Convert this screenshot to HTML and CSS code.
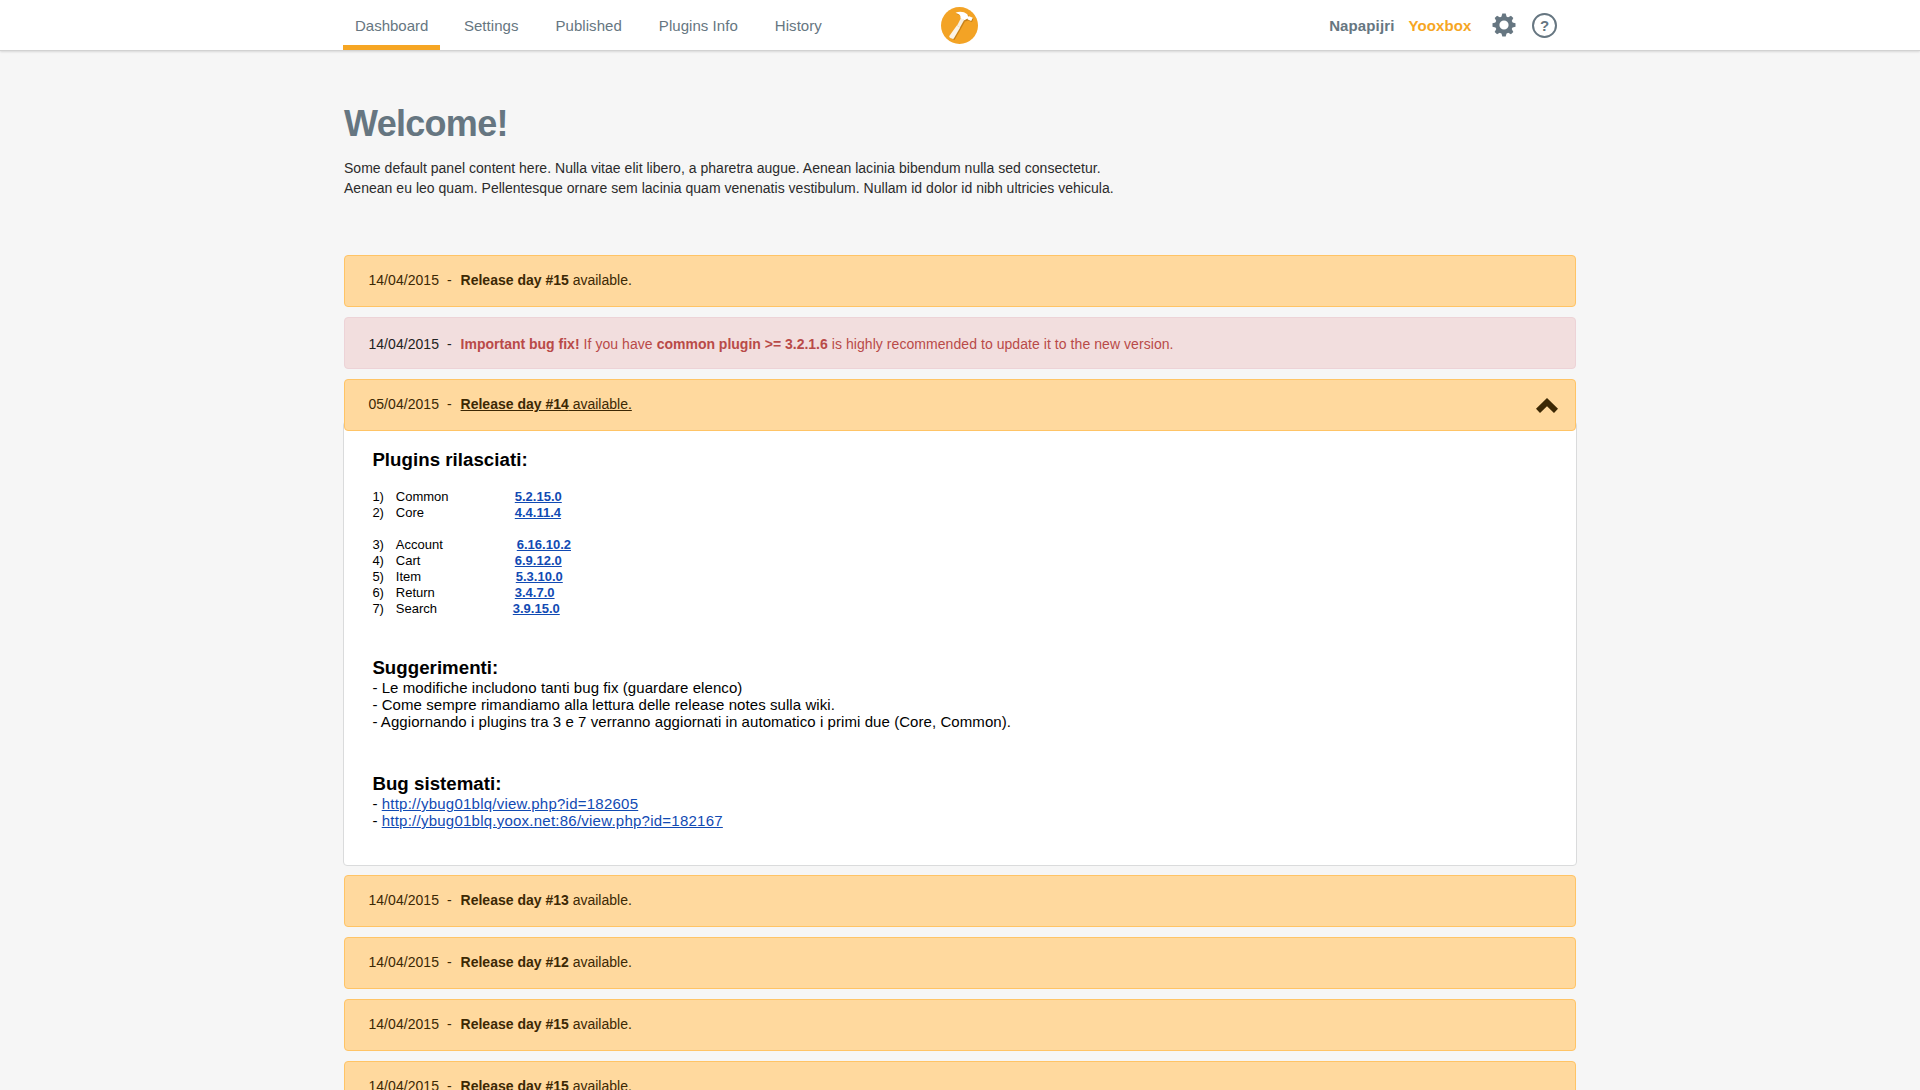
FILE: index.html
```html
<!DOCTYPE html>
<html lang="en">
<head>
<meta charset="utf-8">
<title>Dashboard</title>
<link rel="stylesheet" href="styles.css">
</head>
<body>
<header class="topbar">
  <div class="topbar-inner">
    <nav class="nav">
      <a class="nav-item active">Dashboard</a>
      <a class="nav-item">Settings</a>
      <a class="nav-item">Published</a>
      <a class="nav-item">Plugins Info</a>
      <a class="nav-item">History</a>
    </nav>
    <svg class="logo" viewBox="0 0 37 37" width="37" height="37">
      <circle cx="18.5" cy="18.5" r="18.5" fill="#f3a325"/>
      <g transform="translate(1 1)" fill="#a86a10" opacity=".6">
        <path d="M20 11.5 23 13.5 12.5 32 8 29.5Z"/>
        <path d="M14.5 6C18 4 23 4.500 26.500 7.500L27.500 9.500 31.500 10.500 30 14 26 12.500 23.500 13.500 19.500 11.500C20 8.500 18 7 14.500 6Z"/>
      </g>
      <path d="M20 11 23.200 13 19 20.500 16 18.700Z" fill="#f7efe0"/>
      <path d="M15.800 18.500 19.200 20.500 12.800 31.500C12 32.800 7.500 30.500 8.300 29Z" fill="#fbf3e6"/>
      <path d="M14.500 5.800C18 4 23 4.300 26.300 7.200L27.200 9.600 28.200 9.200 31.800 10.800 30.200 14 26.800 12.400 26.500 11.500 23.500 13.300 19.500 11.200C20 8.500 18 6.800 14.500 5.800Z" fill="#fff"/>
    </svg>
    <div class="account">
      <span class="client">Napapijri</span>
      <span class="brand">Yooxbox</span>
      <svg class="gear" viewBox="-12 -12 24 24" width="24" height="24">
        <circle r="6.700" fill="none" stroke="#667681" stroke-width="4.200"/>
        <g fill="#667681">
          <path id="tooth" d="M-2.800-7.500-1.700-11.500H1.700L2.800-7.500Z"/>
          <use href="#tooth" transform="rotate(45)"/>
          <use href="#tooth" transform="rotate(90)"/>
          <use href="#tooth" transform="rotate(135)"/>
          <use href="#tooth" transform="rotate(180)"/>
          <use href="#tooth" transform="rotate(225)"/>
          <use href="#tooth" transform="rotate(270)"/>
          <use href="#tooth" transform="rotate(315)"/>
        </g>
      </svg>
      <span class="help">?</span>
    </div>
  </div>
</header>
<main class="page">
  <h1>Welcome!</h1>
  <p class="intro">Some default panel content here. Nulla vitae elit libero, a pharetra augue. Aenean lacinia bibendum nulla sed consectetur.<br>Aenean eu leo quam. Pellentesque ornare sem lacinia quam venenatis vestibulum. Nullam id dolor id nibh ultricies vehicula.</p>

  <div class="releases">
    <div class="alert"><span class="date">14/04/2015</span><span class="dash">-</span><span><b>Release day #15</b> available.</span></div>
    <div class="alert danger"><span class="date">14/04/2015</span><span class="dash">-</span><span class="message"><b>Important bug fix!</b> If you have <b>common plugin &gt;= 3.2.1.6</b> is highly recommended to update it to the new version.</span></div>
    <div class="release-open">
      <div class="alert"><span class="date">05/04/2015</span><span class="dash">-</span><span class="title-link"><b>Release day #14</b> available.</span>
        <svg class="chevron" viewBox="0 0 22 15" width="22" height="15"><path d="M11 0 22 10.700 18 15 11 8.200 4 15 0 10.700Z" fill="#3c2804"/></svg>
      </div>
      <section class="notes">
        <h2>Plugins rilasciati:</h2>
        <ul class="plugins">
          <li><span>1)</span><span>Common</span><a>5.2.15.0</a></li>
          <li class="group-end"><span>2)</span><span>Core</span><a>4.4.11.4</a></li>
          <li><span>3)</span><span>Account</span><a class="shift-2">6.16.10.2</a></li>
          <li><span>4)</span><span>Cart</span><a>6.9.12.0</a></li>
          <li><span>5)</span><span>Item</span><a class="shift-1">5.3.10.0</a></li>
          <li><span>6)</span><span>Return</span><a>3.4.7.0</a></li>
          <li><span>7)</span><span>Search</span><a class="shift-back">3.9.15.0</a></li>
        </ul>
        <h2>Suggerimenti:</h2>
        <p class="tips">- Le modifiche includono tanti bug fix (guardare elenco)<br>- Come sempre rimandiamo alla lettura delle release notes sulla wiki.<br>- Aggiornando i plugins tra 3 e 7 verranno aggiornati in automatico i primi due (Core, Common).</p>
        <h2>Bug sistemati:</h2>
        <p class="bugs">- <a>http://ybug01blq/view.php?id=182605</a><br>- <a>http://ybug01blq.yoox.net:86/view.php?id=182167</a></p>
      </section>
    </div>
    <div class="alert"><span class="date">14/04/2015</span><span class="dash">-</span><span><b>Release day #13</b> available.</span></div>
    <div class="alert"><span class="date">14/04/2015</span><span class="dash">-</span><span><b>Release day #12</b> available.</span></div>
    <div class="alert"><span class="date">14/04/2015</span><span class="dash">-</span><span><b>Release day #15</b> available.</span></div>
    <div class="alert"><span class="date">14/04/2015</span><span class="dash">-</span><span><b>Release day #15</b> available.</span></div>
  </div>
</main>
</body>
</html>
```
FILE: styles.css
```css
* { box-sizing: border-box; }
html { height: 100%; overflow: hidden; }
body {
  margin: 0;
  height: 100%;
  overflow: hidden;
  background: #f6f6f6;
  color: #2b2b2b;
  font: 14px/20px "Liberation Sans", Arial, sans-serif;
}
h1, h2, p, ul { margin: 0; padding: 0; }

.topbar {
  height: 50px;
  background: #fff;
  box-shadow: 0 1px 0 #d2d2d2, 0 2px 2px rgba(0, 0, 0, .12);
}
.topbar-inner {
  display: grid;
  grid-template-columns: 598px 37px 1fr;
  width: 1234px;
  height: 50px;
  margin: 0 auto;
}
.nav { display: flex; gap: 13px; font-size: 15px; color: #667681; }
.nav-item { height: 50px; padding: 1px 12px 0; line-height: 49px; letter-spacing: .05px; white-space: nowrap; }
.nav-item.active { margin-right: -1.5px; letter-spacing: 0; border-bottom: 5px solid #f6a623; }
.logo { margin-top: 7px; }
.account { display: flex; align-items: flex-start; justify-content: flex-end; padding-right: 20px; }
.client, .brand { padding-top: 1px; font-size: 15px; font-weight: bold; line-height: 49px; letter-spacing: .12px; }
.client { margin-right: 14px; color: #667681; }
.brand { margin-right: 20.5px; color: #f6a623; }
.gear { margin: 13px 16px 0 0; }
.help {
  width: 25px;
  height: 25px;
  margin-top: 13px;
  border: 2px solid #667681;
  border-radius: 50%;
  color: #667681;
  font-size: 15px;
  font-weight: bold;
  line-height: 21px;
  text-align: center;
}

.page { width: 1232px; margin: 0 auto; padding-top: 54px; }
h1 { color: #667681; font-size: 36px; line-height: 40px; letter-spacing: -.7px; }
.intro { margin-top: 14px; letter-spacing: .026px; }
.releases { display: flex; flex-direction: column; gap: 10px; margin-top: 57px; }

.alert {
  position: relative;
  display: flex;
  height: 52px;
  padding: 14px 23.4px 0;
  border: 1px solid #ffc466;
  border-radius: 4px;
  background: #ffd99e;
  color: #3c2804;
  white-space: nowrap;
}
.alert.danger { padding-top: 16px; border-color: #edd3d7; background: #f2dede; color: #222; }
.message { color: #b94a48; letter-spacing: .06px; }
.message b { letter-spacing: 0; }
.date { width: 78.5px; letter-spacing: .06px; }
.dash { width: 13.7px; }
.title-link { text-decoration: underline; }
.chevron { margin: 4px -6px 0 auto; }

.release-open { margin-bottom: -1px; }
.notes {
  height: 445px;
  margin: -10px -1px 0;
  padding: 27px 28.4px 0;
  border: 1px solid #dadbdc;
  border-radius: 4px;
  background: #fff;
  color: #000;
}
.notes h2 { font-size: 18.67px; line-height: 22px; letter-spacing: .04px; }
.notes a { color: #114ab3; text-decoration: underline; }
.plugins { margin: 18px 0 40px; font-size: 13px; line-height: 16px; list-style: none; }
.plugins li { display: grid; grid-template-columns: 23.4px 119px auto; justify-content: start; }
.plugins a { font-weight: bold; }
.plugins .group-end { margin-bottom: 16px; }
.shift-1 { margin-left: 1px; }
.shift-2 { margin-left: 2px; }
.shift-back { margin-left: -2px; }
.tips, .bugs { font-size: 15px; line-height: 17px; letter-spacing: .07px; }
.tips { margin-bottom: 43px; }
.bugs a { letter-spacing: .24px; }
```
